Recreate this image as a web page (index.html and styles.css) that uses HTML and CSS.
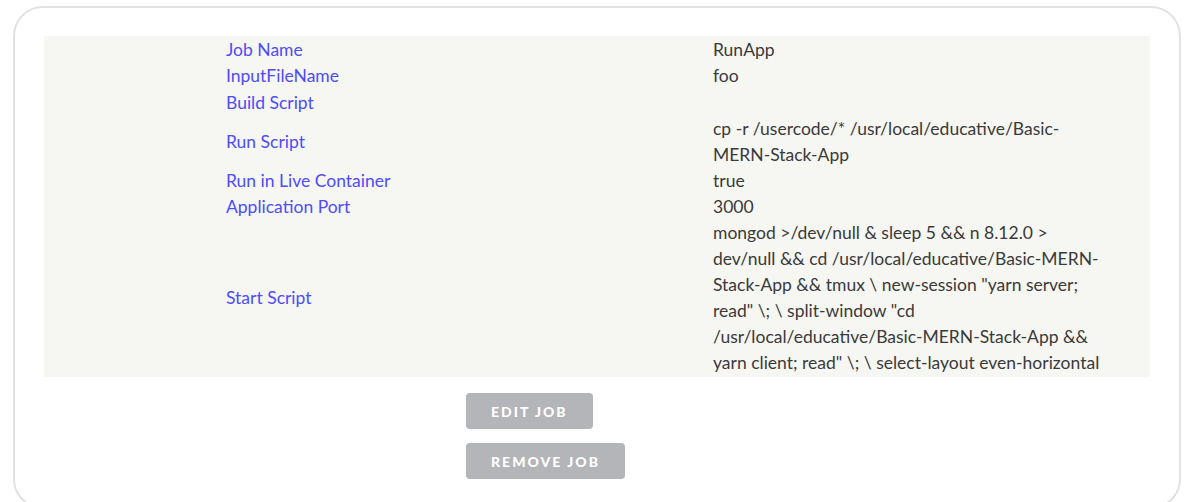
FILE: index.html
```html
<!DOCTYPE html>
<html lang="en">

<head>
    <meta charset="UTF-8">
    <meta name="viewport" content="width=device-width, initial-scale=1.0">
    <title>Job Details</title>
    <link rel="stylesheet" href="styles.css">
</head>

<body>
    <div class="card">
        <div class="job-details">
            <div class="job-row">
                <div class="job-key">Job Name</div>
                <div class="job-value">RunApp</div>
            </div>
            <div class="job-row">
                <div class="job-key">InputFileName</div>
                <div class="job-value">foo</div>
            </div>
            <div class="job-row job-row-empty">
                <div class="job-key">Build Script</div>
                <div class="job-value"></div>
            </div>
            <div class="job-row">
                <div class="job-key">Run Script</div>
                <div class="job-value">cp -r /usercode/* /usr/local/educative/Basic-MERN-Stack-App</div>
            </div>
            <div class="job-row">
                <div class="job-key">Run in Live Container</div>
                <div class="job-value">true</div>
            </div>
            <div class="job-row">
                <div class="job-key">Application Port</div>
                <div class="job-value">3000</div>
            </div>
            <div class="job-row">
                <div class="job-key">Start Script</div>
                <div class="job-value">mongod &gt;/dev/null &amp; sleep 5 &amp;&amp; n 8.12.0 &gt; dev/null &amp;&amp; cd /usr/local/educative/Basic-MERN-Stack-App &amp;&amp; tmux \ new-session "yarn server; read" \; \ split-window "cd /usr/local/educative/Basic-MERN-Stack-App &amp;&amp; yarn client; read" \; \ select-layout even-horizontal</div>
            </div>
        </div>

        <div class="actions">
            <button class="btn">Edit Job</button>
            <button class="btn">Remove Job</button>
        </div>
    </div>
</body>

</html>
```

FILE: styles.css
```css
* {
    margin: 0;
    padding: 0;
    box-sizing: border-box;
}

body {
    background: white;
    font-family: 'Lato', 'Open Sans', sans-serif;
    overflow: hidden;
}

.card {
    margin: 6px 19px 0 13px;
    padding: 28px 29px 28px;
    border: 2px solid #e2e2e2;
    border-radius: 30px;
    background: white;
}

.job-details {
    background: #f6f6f3;
    padding: 1px 0 1px 182px;
}

.job-row {
    display: grid;
    grid-template-columns: 487px 400px;
    align-items: center;
    font-size: 17.5px;
    line-height: 26px;
}

.job-row-empty {
    min-height: 27px;
}

.job-key {
    color: #4d4dfa;
}

.job-value {
    color: #3a3a3a;
}

.actions {
    display: flex;
    flex-direction: column;
    align-items: flex-start;
    gap: 14px;
    margin-top: 16px;
    padding-left: 422px;
}

.btn {
    height: 36px;
    padding: 0 25px;
    background: #b3b5b8;
    color: white;
    border: none;
    border-radius: 4px;
    font-family: 'Lato', sans-serif;
    font-weight: 900;
    font-size: 14px;
    letter-spacing: 2px;
    text-transform: uppercase;
    cursor: pointer;
}
```
